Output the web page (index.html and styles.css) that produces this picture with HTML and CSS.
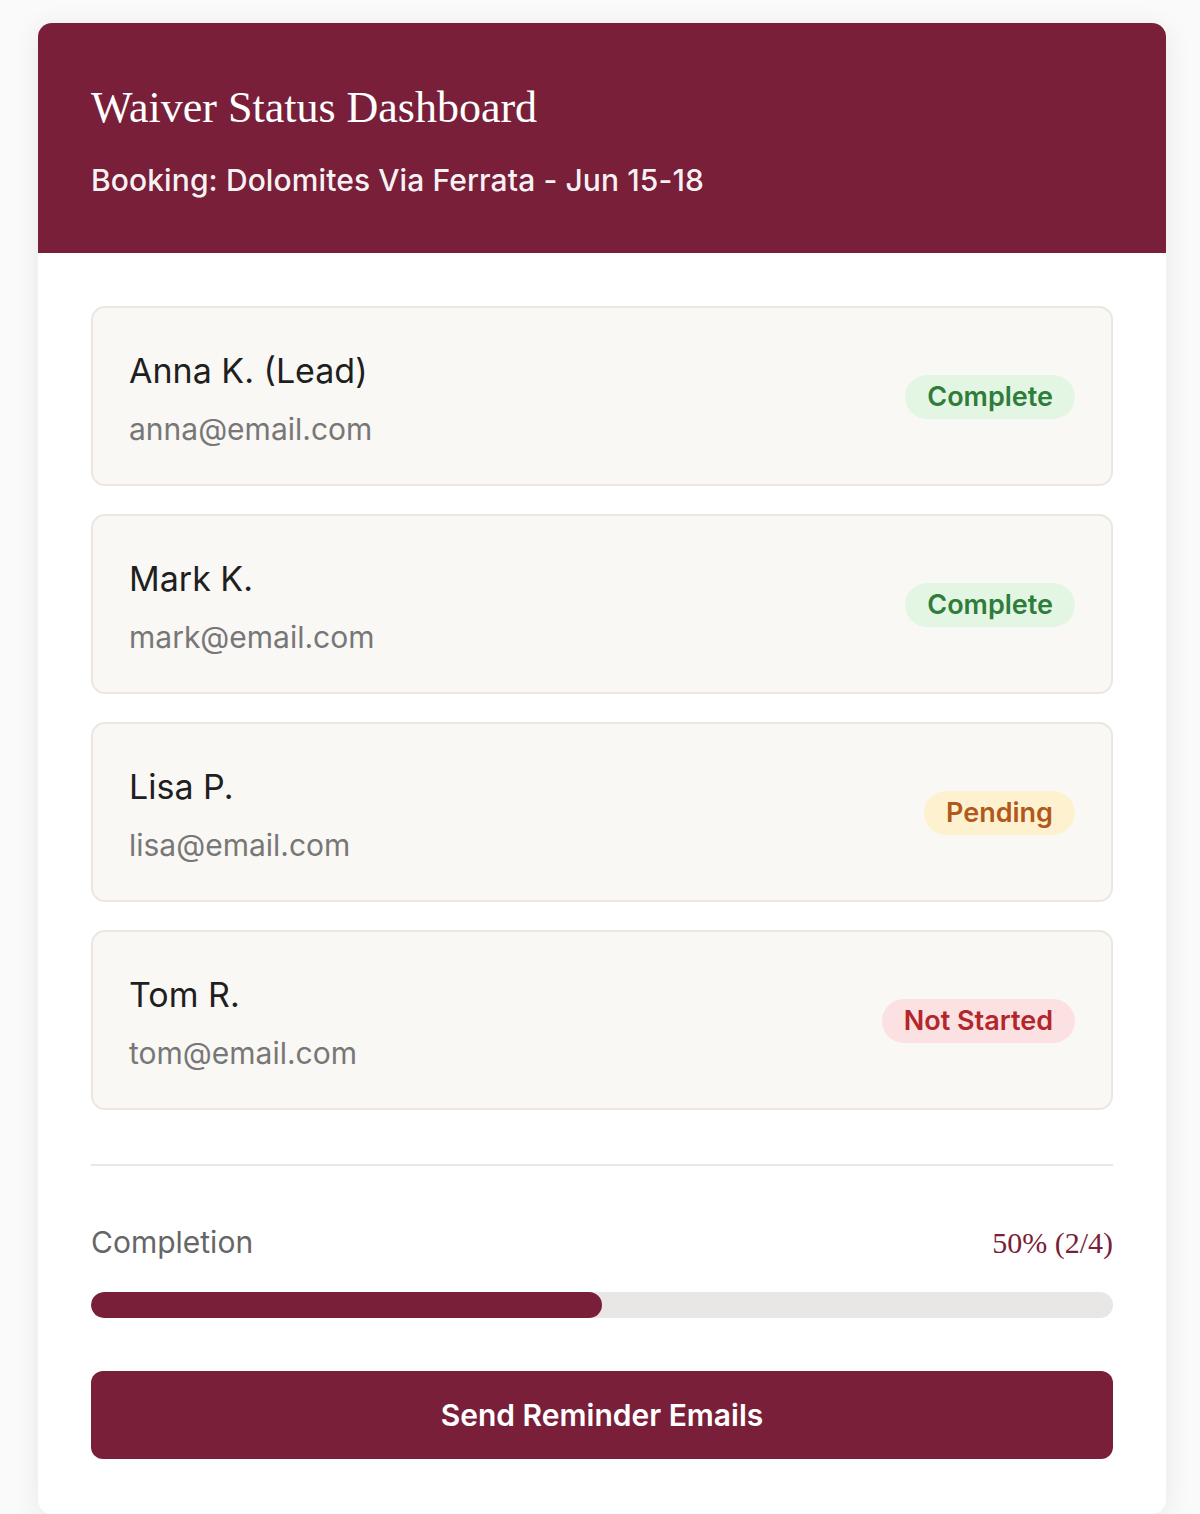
FILE: index.html
```html
<!DOCTYPE html>
<html lang="en">
<head>
<meta charset="utf-8">
<title>Waiver Status Dashboard</title>
<link rel="stylesheet" href="styles.css">
</head>
<body>
<div class="page">
  <div class="card">
    <header class="card-header">
      <h1 class="title">Waiver Status Dashboard</h1>
      <p class="subtitle">Booking: Dolomites Via Ferrata - Jun 15-18</p>
    </header>
    <main class="card-body">
      <ul class="people">
        <li class="person">
          <div class="person-info">
            <div class="person-name">Anna K. (Lead)</div>
            <div class="person-email">anna@email.com</div>
          </div>
          <span class="badge badge-complete">Complete</span>
        </li>
        <li class="person">
          <div class="person-info">
            <div class="person-name">Mark K.</div>
            <div class="person-email">mark@email.com</div>
          </div>
          <span class="badge badge-complete">Complete</span>
        </li>
        <li class="person">
          <div class="person-info">
            <div class="person-name">Lisa P.</div>
            <div class="person-email">lisa@email.com</div>
          </div>
          <span class="badge badge-pending">Pending</span>
        </li>
        <li class="person">
          <div class="person-info">
            <div class="person-name">Tom R.</div>
            <div class="person-email">tom@email.com</div>
          </div>
          <span class="badge badge-not">Not Started</span>
        </li>
      </ul>
      <section class="summary">
        <div class="summary-row">
          <span class="summary-label">Completion</span>
          <span class="summary-value">50% (2/4)</span>
        </div>
        <div class="progress"><div class="progress-fill" style="width: 50%"></div></div>
        <button class="btn" type="button">Send Reminder Emails</button>
      </section>
    </main>
  </div>
</div>
</body>
</html>
```
FILE: styles.css
```css
* { box-sizing: border-box; }
html, body { margin: 0; padding: 0; }
body {
  background: #fafafa;
  font-family: Inter, "Noto Sans", "Liberation Sans", sans-serif;
  color: #222;
}
.page {
  padding: 23px 34px 0 38px;
}
.card {
  background: #ffffff;
  border-radius: 14px;
  overflow: hidden;
  box-shadow: 0 4px 28px rgba(0, 0, 0, 0.08);
}
.card-header {
  background: #7a1f3a;
  color: #fff;
  padding: 59px 53px 55px;
}
.title {
  margin: 0;
  font-family: "Liberation Serif", "DejaVu Serif", serif;
  font-weight: 400;
  font-size: 44px;
  line-height: 52px;
  letter-spacing: 0;
}
.subtitle {
  margin: 28px 0 0;
  font-size: 30px;
  line-height: 36px;
  font-weight: 500;
  letter-spacing: 0.1px;
  color: rgba(255, 255, 255, 0.96);
}
.card-body {
  padding: 53px 53px 55px;
}
.people {
  list-style: none;
  margin: 0;
  padding: 0;
  display: flex;
  flex-direction: column;
  gap: 28px;
}
.person {
  display: flex;
  align-items: center;
  justify-content: space-between;
  background: #faf8f5;
  border: 2px solid #ebe6e3;
  border-radius: 14px;
  padding: 0 36px;
  height: 180px;
}
.person-info {
  padding-top: 4px;
}
.person-name {
  font-size: 34px;
  line-height: 44px;
  color: #1f1f1f;
}
.person-email {
  margin-top: 17px;
  font-size: 30px;
  line-height: 38px;
  color: #777;
}
.badge {
  display: inline-block;
  height: 44px;
  line-height: 44px;
  padding: 0 22px;
  border-radius: 22px;
  font-size: 27px;
  font-weight: 600;
  margin-top: 2px;
}
.badge-complete { background: #e3f6e3; color: #2e7d3a; }
.badge-pending { background: #fdf1cf; color: #b1591a; }
.badge-not { background: #fbe1e1; color: #b3262b; }
.summary {
  margin-top: 54px;
  border-top: 2px solid #e8e8e8;
  padding-top: 56px;
}
.summary-row {
  display: flex;
  justify-content: space-between;
  align-items: baseline;
}
.summary-label {
  font-size: 30px;
  line-height: 40px;
  color: #666;
}
.summary-value {
  font-family: "Liberation Serif", "DejaVu Serif", serif;
  font-size: 30px;
  color: #7a1f3a;
}
.progress {
  margin-top: 30px;
  height: 26px;
  border-radius: 13px;
  background: #e8e7e6;
  overflow: hidden;
}
.progress-fill {
  height: 100%;
  background: #7a1f3a;
  border-radius: 13px;
}
.btn {
  display: block;
  width: 100%;
  margin-top: 53px;
  height: 88px;
  border: none;
  border-radius: 12px;
  background: #7a1f3a;
  color: #fff;
  font-family: Inter, "Noto Sans", "Liberation Sans", sans-serif;
  font-size: 30px;
  font-weight: 600;
  cursor: pointer;
}
```
